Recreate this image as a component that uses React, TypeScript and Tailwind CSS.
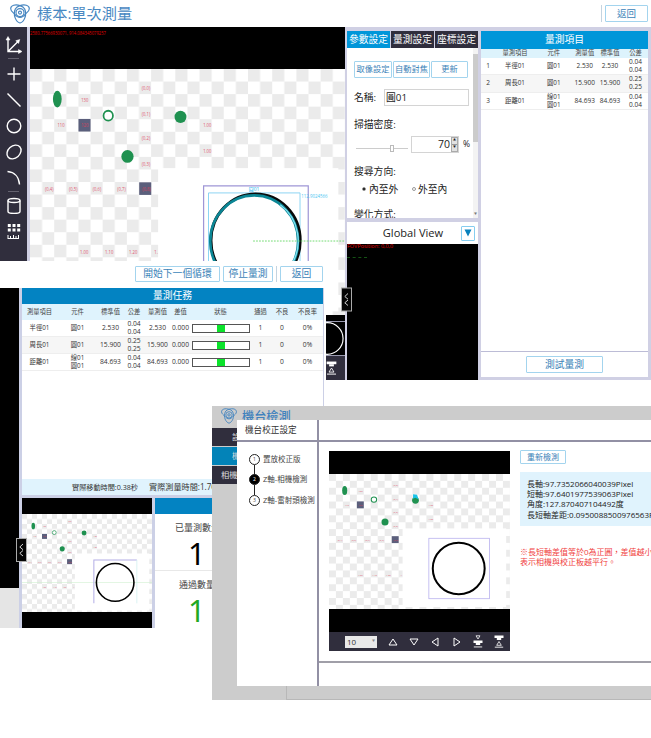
import React from "react";

const SCENE_LABELS: [number, number, string][] = [
  [66.3, 10.7, "(0,0)"],
  [66.3, 24.7, "(0,1)"],
  [66.3, 38.3, "(0,2)"],
  [66.3, 52.3, "(0,3)"],
  [31.3, 17, "130"],
  [17.7, 30.7, "110"],
  [31.3, 30.7, "120"],
  [101.3, 30.7, "1.00"],
  [101.3, 45.3, "1.00"],
  [11, 66, "(0,4)"],
  [24.7, 66, "(0,5)"],
  [38.3, 66, "(0,6)"],
  [52.3, 66, "(0,7)"],
  [66.5, 66, "(0,8)"],
  [31, 100.7, "1.00"],
  [45.3, 100.7, "1.10"],
  [59, 100.7, "1.20"],
];

type SceneProps = {
  id: string;
  className: string;
  variant: "live" | "task" | "axis";
};

function Scene({ id, className, variant }: SceneProps) {
  return (
    <svg viewBox="0 0 180 135" preserveAspectRatio="none" className={className}>
      <defs>
        <pattern id={id} width="13.84" height="13.78" patternUnits="userSpaceOnUse">
          <rect width="13.84" height="13.78" fill="#fff" />
          <rect width="6.92" height="6.89" fill="#ebebeb" />
          <rect x="6.92" y="6.89" width="6.92" height="6.89" fill="#ebebeb" />
        </pattern>
      </defs>
      <rect width="180" height="135" fill={`url(#${id})`} />
      <rect x="73.2" y="54.4" width="103" height="78.6" fill="#fff" />
      <g fill="#1f9150">
        <ellipse cx="15.6" cy="16.5" rx="2.5" ry="4.6" />
        <circle cx="86" cy="26.3" r="3.4" />
        <circle cx="55.7" cy="48" r="3.5" />
      </g>
      <circle cx="44.7" cy="25.6" r="2.7" fill="#fff" stroke="#1f9150" strokeWidth="1" />
      <rect x="27.7" y="27.4" width="6.9" height="6.9" fill="#5b5f7c" />
      <rect x="62.4" y="62.2" width="6.9" height="6.9" fill="#5b5f7c" />
      <g fill="#e0405a" fontSize="2.4" textAnchor="middle" opacity="0.85">
        {SCENE_LABELS.map(([x, y, t]) => (
          <text key={`${x}-${y}`} x={x} y={y + 0.9}>
            {t}
          </text>
        ))}
        <text x="72" y="101.6">1.</text>
      </g>
      {variant === "live" && (
        <g fill="none">
          <path d="M99.2 135V64.2H159V135" stroke="#9f96d6" strokeWidth="0.7" />
          <path d="M102 135V68H154.3V135" stroke="#7fd0f2" strokeWidth="0.5" />
          <circle cx="128.9" cy="94.1" r="25.5" stroke="#0a0a0a" strokeWidth="1.7" />
          <circle cx="128.1" cy="94.5" r="25.1" stroke="#0b8695" strokeWidth="1.5" />
          <path d="M143 74.5A24.2 24.2 0 0 1 149 108" stroke="#7fdff0" strokeWidth="0.8" />
          <path d="M127.5 94.4H180" stroke="#63d763" strokeWidth="0.5" strokeDasharray="1 0.7" />
          <text x="128" y="67" fontSize="2.8" textAnchor="middle" fill="#22b3ee">圓01</text>
          <text x="155" y="70.8" fontSize="3.1" textLength="15" lengthAdjust="spacingAndGlyphs" fill="#4cc7f2">112.9024566</text>
        </g>
      )}
      {variant === "task" && (
        <g fill="none">
          <path d="M0 94.4H180" stroke="#ccf0cc" strokeWidth="0.8" />
          <path d="M99.5 123V63.3H159" stroke="#b3aee6" strokeWidth="1.4" />
          <path d="M159 63.3V123" stroke="#cdeeee" strokeWidth="1" />
          <circle cx="129" cy="94.2" r="26" stroke="#000" strokeWidth="2.2" />
        </g>
      )}
      {variant === "axis" && (
        <g fill="none">
          <rect x="99.3" y="64.3" width="60.4" height="60.4" stroke="#b9b2ee" strokeWidth="0.8" />
          <circle cx="129" cy="94.5" r="25.8" stroke="#000" strokeWidth="2" />
          <path d="M83.6 20.2l4 .5 1.4 4.6-3.200-1.600-2.200 1z" fill="#19c3e8" />
        </g>
      )}
    </svg>
  );
}

function Logo({ className }: { className: string }) {
  return (
    <svg viewBox="0 0 20 20" className={className} fill="none" stroke="#4786c0" strokeWidth="1.15">
      <path d="M10 1.6C5.500 0 .6 1.300 .7 4.800c.1 2.600 2.500 3.600 3.800 5.200M10 1.600c4.500-1.600 9.400-.3 9.300 3.200-.1 2.600-2.500 3.600-3.800 5.200" />
      <path d="M5.300 5C2.600 11 6 18 10 19c4-1 7.400-8 4.700-14C13.600 2.800 11.500 2 10 1.600 8.500 2 6.400 2.800 5.300 5z" />
      <path d="M4.500 10c2 2.700 4 3.500 5.500 3.500s3.500-.8 5.500-3.500" />
      <circle cx="10" cy="8.600" r="4" />
      <circle cx="10" cy="8.600" r="1.500" />
    </svg>
  );
}

function Btn({ className, children }: { className: string; children: React.ReactNode }) {
  return (
    <button
      className={`flex shrink-0 items-center justify-center whitespace-nowrap rounded-[1px] border border-[#a3d4ee] bg-white leading-none text-[#3c83b8] ${className}`}
    >
      {children}
    </button>
  );
}

function Lens({ up, className }: { up?: boolean; className: string }) {
  return up ? (
    <svg viewBox="0 0 10 13" className={className} fill="#fff">
      <rect x=".5" y=".5" width="9" height="2.500" />
      <rect x="2.800" y="3" width="4.400" height="2" />
      <path d="M5 6.500L7.300 10.300H2.700z" fill="none" stroke="#fff" strokeWidth=".8" />
      <rect x=".8" y="11.700" width="8.400" height=".9" />
    </svg>
  ) : (
    <svg viewBox="0 0 10 13" className={className} fill="#fff">
      <path d="M3 .8h4L5 4z" fill="none" stroke="#fff" strokeWidth=".8" />
      <rect x=".5" y="5.500" width="9" height="2.500" />
      <rect x="2.800" y="8" width="4.400" height="2" />
      <rect x=".8" y="11.500" width="8.400" height=".9" />
    </svg>
  );
}

function Handle({ className }: { className: string }) {
  return (
    <svg viewBox="0 0 11 24" className={className}>
      <rect x=".5" y=".5" width="10" height="23" fill="#050505" stroke="#aaa" />
      <path d="M7 6L3.800 9l3.200 2.700M7 12.500L3.800 15.300 7 18" fill="none" stroke="#e8e8e8" strokeWidth=".9" />
    </svg>
  );
}

const TOOLS: { h: string; art: React.ReactNode }[] = [
  {
    h: "h-[26px] mt-[5px]",
    art: (
      <>
        <path d="M5 4V17.500H17.500M5 17.500L15 7.500" />
        <path d="M5 2.500L3 6h4zM19 17.500l-3.500-2v4zM16.800 5.500l-4 1.200 2.800 2.800z" fill="#fff" strokeWidth=".5" />
      </>
    ),
  },
  { h: "h-[27px] mt-[1px]", art: <path d="M11 4.500V17.500M4.500 11H17.500" /> },
  { h: "h-[26px]", art: <path d="M4.500 4.500L17.500 17.500" /> },
  { h: "h-[26px]", art: <circle cx="11" cy="11" r="6.800" /> },
  { h: "h-[26px]", art: <ellipse cx="11" cy="11" rx="7.800" ry="6" transform="rotate(-42 11 11)" /> },
  { h: "h-[26px]", art: <path d="M4.500 4.500C11.500 5 16 10 16.500 17.500" /> },
  {
    h: "h-[26px] mt-[1px]",
    art: (
      <>
        <ellipse cx="11" cy="5.500" rx="6" ry="2" />
        <path d="M5 5.500V16.500C5 19 17 19 17 16.500V5.500" />
      </>
    ),
  },
  {
    h: "h-[25px]",
    art: (
      <g fill="#fff" stroke="none">
        {[4.800, 9.500, 14.200].map((x) => (
          <React.Fragment key={x}>
            <rect x={x} y="3" width="3" height="3" />
            <rect x={x} y="7.500" width="3" height="3" />
          </React.Fragment>
        ))}
        <path d="M4.500 14h1v3h1.500v-2h1v2h2v-3h1v3h1.500v-2h1v2h1.500v-3h1v4H4.500z" />
      </g>
    ),
  },
];

function ToolRail() {
  return (
    <div className="flex w-[27px] shrink-0 flex-col items-center bg-[#302e3d]">
      {TOOLS.map((t, i) => (
        <React.Fragment key={i}>
          {(i === 1 || i === 6) && <div className="h-px w-[11px] shrink-0 bg-[#64626f]" />}
          <div className={`flex shrink-0 items-center ${t.h}`}>
            <svg viewBox="0 0 22 22" className="size-[22px]" fill="none" stroke="#fff" strokeWidth="1.4">
              {t.art}
            </svg>
          </div>
        </React.Fragment>
      ))}
    </div>
  );
}

const ITEMS = [
  ["1", "半徑01", "圓01", "2.530", "2.530", "0.04"],
  ["2", "周長01", "圓01", "15.900", "15.900", "0.25"],
  ["3", "距離01", "線01\n圓01", "84.693", "84.693", "0.04"],
];

function ParamsPanel() {
  return (
    <div className="flex h-[170px] bg-white">
      <div className="flex min-w-0 flex-1 flex-col overflow-hidden pl-[7px] text-[9.8px] leading-none text-[#222]">
        <div className="mt-[13px] flex shrink-0 gap-px text-[8.2px]">
          <Btn className="h-[17px] w-[38px]">取像設定</Btn>
          <Btn className="h-[17px] w-[37px]">自動對焦</Btn>
          <Btn className="h-[17px] w-[37px]">更新</Btn>
        </div>
        <div className="mt-[11px] flex h-[17px] shrink-0 items-center">
          <span className="w-[30px] whitespace-nowrap">名稱:</span>
          <div className="flex h-[17px] w-[85px] items-center border border-[#d4d4d4] pl-px">圓01</div>
        </div>
        <div className="mt-[14px] shrink-0">掃描密度:</div>
        <div className="mt-[6px] flex h-[17px] shrink-0 items-center">
          <div className="ml-[2px] flex h-[7px] w-[52px] items-center pt-[8px]">
            <div className="h-px w-[34px] bg-[#ccc]" />
            <div className="h-[7px] w-[4px] border border-[#bbb] bg-white" />
            <div className="h-px flex-1 bg-[#ccc]" />
          </div>
          <div className="ml-[3px] flex h-[17px] w-[48px] items-center justify-end border border-[#d4d4d4] text-[10.500px]">
            70
            <div className="ml-px flex h-[15px] w-[7px] flex-col border border-[#aaa] bg-[#e2e2e2] text-[3px]">
              <span className="flex flex-1 items-center justify-center border-b border-[#999]">▲</span>
              <span className="flex flex-1 items-center justify-center">▼</span>
            </div>
          </div>
          <span className="ml-[4px] text-[8.500px]">%</span>
        </div>
        <div className="mt-[14px] shrink-0">搜尋方向:</div>
        <div className="mt-[8px] flex shrink-0 items-center">
          <span className="ml-[8px] size-[4px] rounded-full border border-[#999] bg-black" />
          <span className="ml-[3px] w-[43px]">內至外</span>
          <span className="size-[4px] rounded-full border border-[#999]" />
          <span className="ml-[2px]">外至內</span>
        </div>
        <div className="mt-[16px] shrink-0">變化方式:</div>
      </div>
      <div className="flex w-[5px] shrink-0 flex-col items-center justify-between bg-[#f3f3f3] pb-[2px] text-[3px] leading-none text-[#777]">
        <div className="mt-[6px] h-[88px] w-full bg-[#cbcbcb]" />
        <span>▼</span>
      </div>
    </div>
  );
}

function MeasureWindow() {
  return (
    <section className="absolute left-0 top-0 flex h-[380px] w-[651px] flex-col bg-white">
      <header className="flex h-[27px] shrink-0 items-center">
        <Logo className="ml-[10px] size-[20px]" />
        <h1 className="ml-[7px] flex-1 whitespace-nowrap text-[15.2px] leading-none text-[#4888c2]">樣本:單次測量</h1>
        <div className="h-[17px] w-px bg-[#c4d4e0]" />
        <Btn className="ml-[3px] mr-[3px] h-[17px] w-[43px] text-[9.500px]">返回</Btn>
      </header>
      <div className="flex h-[353px] bg-[#d0d0e4]">
        <ToolRail />
        <div className="ml-[3px] flex w-[315px] shrink-0 flex-col bg-black">
          <div className="h-[41.500px] shrink-0 pt-[3px]">
            <svg viewBox="0 0 78 6" className="h-[6px] w-[78px]">
              <text x="0" y="4.600" fontSize="4.600" textLength="76" lengthAdjust="spacingAndGlyphs" fill="#e00000">
                2580.77566930071, 914.084345079257
              </text>
            </svg>
          </div>
          <Scene id="checker-live" variant="live" className="h-[246px] w-[315px] shrink-0" />
          <div className="h-[6px] shrink-0" />
          <div className="flex h-[35px] shrink-0 justify-end border-y border-[#9a9ab0]">
            <svg viewBox="0 0 20 34" className="h-full w-[20px]">
              <circle cx="2" cy="17" r="16.300" fill="none" stroke="#fff" strokeWidth="1.200" />
            </svg>
          </div>
          <div className="flex flex-1 items-center justify-end bg-[#302e3d] pr-[8px]">
            <Lens up className="h-[14px] w-[11px]" />
          </div>
        </div>
        <div className="ml-[2px] mt-[4px] flex w-[131px] shrink-0 flex-col">
          <div className="flex h-[17px] shrink-0 gap-px text-[9.800px] leading-none text-white">
            <div className="flex flex-1 items-center justify-center whitespace-nowrap bg-[#0096d9]">參數設定</div>
            <div className="flex flex-1 items-center justify-center whitespace-nowrap bg-[#302e3d]">量測設定</div>
            <div className="flex flex-1 items-center justify-center whitespace-nowrap bg-[#302e3d]">座標設定</div>
          </div>
          <ParamsPanel />
          <div className="mt-[4px] flex h-[22px] shrink-0 items-center bg-white">
            <span className="flex-1 pl-[18px] text-center text-[11.100px] leading-none text-[#222]">Global View</span>
            <div className="mr-[3px] flex h-[15px] w-[14px] items-center justify-center rounded-[1px] border border-[#85cdf0]">
              <svg viewBox="0 0 8 8" className="size-[8px]"><path d="M.5.5h7L4 7.500z" fill="#0881bd" /></svg>
            </div>
          </div>
          <div className="flex-1 bg-black text-[5.500px] leading-none text-[#e00000]">
            <div>FOVPosition: 0,0,0</div>
            <div className="mt-[7px] h-px w-[20px] border-t border-dashed border-[#145214]" />
          </div>
        </div>
        <div className="ml-[3px] mt-[4px] mb-[3px] flex w-[167px] shrink-0 flex-col bg-white">
          <div className="flex h-[18px] items-center justify-center bg-[#0096d9] text-[9.800px] leading-none text-white">量測項目</div>
          <div className="grid h-[8.500px] grid-cols-[14px_40px_37.5px_24.5px_26px_19px_6px] items-center bg-[#ddf3fc] text-center text-[6.300px] leading-none text-[#444]">
            <span />
            <span>量測項目</span>
            <span>元件</span>
            <span>測量值</span>
            <span>標準值</span>
            <span className="w-[25px]">公差</span>
          </div>
          {ITEMS.map((r, i) => (
            <div
              key={r[0]}
              className={`grid h-[17.600px] grid-cols-[14px_40px_37.5px_24.5px_26px_25px] items-center border-b border-[#eee] text-center text-[6.500px] leading-[8.300px] text-[#333] ${i === 1 ? "bg-[#f6f6f6]" : "bg-white"}`}
            >
              <span>{r[0]}</span>
              <span className="text-[6.300px]">{r[1]}</span>
              <span className="whitespace-pre-line text-[6.300px]">{r[2]}</span>
              <span>{r[3]}</span>
              <span>{r[4]}</span>
              <span className="whitespace-pre-line">{`${r[5]}\n${r[5]}`}</span>
            </div>
          ))}
          <div className="flex-1 border-b border-[#bcbcd6]" />
          <div className="flex h-[25px] items-center justify-center">
            <Btn className="h-[17px] w-[77px] text-[9.800px]">測試量測</Btn>
          </div>
        </div>
      </div>
      <Handle className="absolute left-[341px] top-[287px] h-[25px] w-[11px]" />
    </section>
  );
}

const TASKS = [
  ["半徑01", "圓01", "2.530", "0.04"],
  ["周長01", "圓01", "15.900", "0.25"],
  ["距離01", "線01\n圓01", "84.693", "0.04"],
];

function TaskWindow() {
  return (
    <section className="absolute left-0 top-[261px] flex h-[367px] w-[326px] flex-col bg-white">
      <header className="flex h-[27px] shrink-0 items-center justify-end pb-[1px] pr-[3px] text-[9.800px]">
        <Btn className="h-[16px] w-[85px]">開始下一個循環</Btn>
        <Btn className="ml-[3px] h-[16px] w-[50px]">停止量測</Btn>
        <div className="ml-[3px] mr-[3px] h-[16px] w-px bg-[#c4d4e0]" />
        <Btn className="h-[16px] w-[43px]">返回</Btn>
      </header>
      <div className="flex h-[340px]">
        <div className="flex w-[19px] shrink-0 flex-col">
          <div className="h-[300px] bg-black" />
          <div className="flex-1 bg-[#e5e5e5]" />
        </div>
        <div className="flex w-[305px] shrink-0 flex-col bg-[#ccd0e6] pl-[3px]">
          <div className="flex h-[191px] w-[301px] shrink-0 flex-col bg-white">
            <div className="flex h-[16px] shrink-0 items-center justify-center bg-[#0383c2] text-[9.800px] leading-none text-white">量測任務</div>
            <div className="grid h-[16px] shrink-0 grid-cols-[35px_41px_25px_22px_25px_21px_59px_21px_22px_29px] items-center bg-[#dff3fd] text-center text-[6.300px] leading-none text-[#444]">
              {["測量項目", "元件", "標準值", "公差", "量測值", "差值", "狀態", "通過", "不良", "不良率"].map((h) => (
                <span key={h}>{h}</span>
              ))}
            </div>
            {TASKS.map((r, i) => (
              <div
                key={r[0]}
                className={`grid h-[17px] shrink-0 grid-cols-[35px_41px_25px_22px_25px_21px_59px_21px_22px_29px] items-center border-b border-[#eee] text-center text-[6.700px] leading-[7.600px] text-[#333] ${i === 1 ? "bg-[#f6f6f6]" : "bg-white"}`}
              >
                <span className="text-[6.300px]">{r[0]}</span>
                <span className="whitespace-pre-line text-[6.300px]">{r[1]}</span>
                <span>{r[2]}</span>
                <span className="whitespace-pre-line">{`${r[3]}\n${r[3]}`}</span>
                <span>{r[2]}</span>
                <span>0.000</span>
                <div className="ml-px flex h-[9px] w-[58px] justify-center border border-[#555] bg-white">
                  <div className="h-full w-[8px] bg-[#0be32b]" />
                </div>
                <span>1</span>
                <span>0</span>
                <span>0%</span>
              </div>
            ))}
          </div>
          <div className="flex h-[16px] w-[301px] shrink-0 items-center overflow-hidden whitespace-nowrap bg-[#e0f3fd] text-[#333]">
            <span className="ml-[50px] w-[77px] text-[7.150px]">實際移動時間:0.38秒</span>
            <span className="text-[8.150px]">實際測量時間:1.763秒</span>
          </div>
          <div className="mt-[3px] flex flex-1">
            <div className="flex w-[130px] shrink-0 flex-col bg-black">
              <div className="h-[16px]" />
              <Scene id="checker-task" variant="task" className="h-[98px] w-[130px]" />
            </div>
            <div className="ml-[3px] flex w-[168px] shrink-0 flex-col bg-white text-[9px] leading-none text-[#444]">
              <div className="h-[16px] shrink-0 bg-[#0383c2]" />
              <div className="flex h-[57px] shrink-0 flex-col border-b border-[#e8e8e8]">
                <span className="ml-[20px] mt-[9px]">已量測數量</span>
                <span className="ml-[33px] mt-[6px] font-[family-name:Noto_Sans] text-[30.500px] text-black">1</span>
              </div>
              <span className="ml-[24px] mt-[9px]">通過數量</span>
              <span className="ml-[33px] mt-[6px] font-[family-name:Noto_Sans] text-[30.500px] text-[#22a822]">1</span>
            </div>
          </div>
        </div>
      </div>
      <Handle className="absolute left-[16px] top-[277px] h-[24px] w-[11px]" />
    </section>
  );
}

const STEPS = ["置放校正版", "Z軸-相機檢測", "Z軸-雷射頭檢測"];

function MoveIcon({ turn }: { turn: string }) {
  return (
    <svg viewBox="0 0 10 10" className={`size-[10px] ${turn}`} fill="none" stroke="#fff" strokeWidth="1">
      <path d="M5 2L9 8H1z" />
    </svg>
  );
}

function CalibrationWindow() {
  return (
    <section className="absolute left-[212px] top-[406px] flex h-[294px] w-[439px] flex-col overflow-hidden bg-[#ccc]">
      <header className="flex h-[14px] shrink-0">
        <Logo className="ml-[9px] mt-[2px] size-[16px] shrink-0" />
        <div className="ml-[5px] h-[14px] overflow-hidden pt-[5px]">
          <h2 className="whitespace-nowrap text-[12.200px] font-medium leading-none text-[#4081bd]">機台檢測</h2>
        </div>
      </header>
      <div className="flex h-[266px] shrink-0">
        <nav className="flex w-[25px] shrink-0 flex-col gap-px pt-[8px] text-[8.300px] leading-none text-[#ddd]">
          <div className="flex h-[18px] items-center overflow-hidden whitespace-nowrap bg-[#302e3d] pl-[20px]">設</div>
          <div className="flex h-[18px] items-center overflow-hidden whitespace-nowrap bg-[#0383b8] pl-[20px]">機</div>
          <div className="flex h-[18px] items-center overflow-hidden whitespace-nowrap bg-[#302e3d] pl-[9px]">相機</div>
        </nav>
        <div className="flex w-[80px] shrink-0 flex-col bg-white">
          <div className="flex h-[22px] shrink-0 items-center border-b-2 border-[#9290a4] pl-[8px] text-[8.600px] leading-none text-[#333]">機台校正設定</div>
          <div className="flex flex-col pl-[12px] pt-[12px]">
            {STEPS.map((s, i) => (
              <React.Fragment key={s}>
                {i > 0 && <div className="ml-[5px] h-[10px] w-px bg-[#222]" />}
                <div className="flex h-[10.600px] items-center whitespace-nowrap text-[7.500px] leading-none text-[#444]">
                  <span
                    className={`mr-[3px] flex size-[11px] shrink-0 items-center justify-center rounded-full border border-[#222] text-[5px] ${i === 1 ? "bg-black text-white" : "bg-white"}`}
                  >
                    {i + 1}
                  </span>
                  {s}
                </div>
              </React.Fragment>
            ))}
          </div>
        </div>
        <div className="flex flex-1 flex-col border-l-2 border-[#9290a4] bg-white">
          <div className="h-[22px] shrink-0 border-b-2 border-[#9290a4]" />
          <div className="flex h-[221px] shrink-0 border-b-2 border-[#a09fa8] pt-[8px]">
            <div className="ml-[10px] mt-px flex h-[200px] w-[181px] shrink-0 flex-col bg-black">
              <div className="h-[23px] shrink-0" />
              <Scene id="checker-axis" variant="axis" className="h-[135px] w-[181px] shrink-0" />
              <div className="h-[23px] shrink-0" />
              <div className="flex flex-1 items-center bg-[#302e3d]">
                <div className="ml-[16px] mr-[11px] flex h-[12px] w-[32px] items-center justify-between bg-[#e9e9e9] px-[2px] text-[8px] leading-none text-[#333]">
                  10
                  <span className="text-[3px] text-[#888]">▼</span>
                </div>
                <div className="flex items-center gap-[11.200px]">
                  <MoveIcon turn="rotate-0" />
                  <MoveIcon turn="rotate-180" />
                  <MoveIcon turn="-rotate-90" />
                  <MoveIcon turn="rotate-90" />
                  <Lens className="h-[13px] w-[10px]" />
                  <Lens up className="h-[13px] w-[10px]" />
                </div>
              </div>
            </div>
            <div className="ml-[10px] flex min-w-0 flex-1 flex-col overflow-hidden">
              <Btn className="h-[14px] w-[46px] text-[8px]">重新檢測</Btn>
              <div className="mt-[8px] h-[54px] shrink-0 whitespace-nowrap bg-[#e0f3fd] pl-[7px] pt-[7px] text-[8px] leading-[10.200px] text-[#222]">
                <div>長軸:97.7352066040039Pixel</div>
                <div>短軸:97.6401977539063Pixel</div>
                <div>角度:127.870407104492度</div>
                <div>長短軸差距:0.0950088500976563Pixel</div>
              </div>
              <div className="mt-[21px] shrink-0 whitespace-nowrap text-[8px] leading-[10.400px] text-[#f04040]">
                <div>※長短軸差值等於0為正圓，差值越小</div>
                <div>表示相機與校正板越平行。</div>
              </div>
            </div>
          </div>
          <div className="flex-1" />
        </div>
      </div>
      <div className="ml-[74px] h-[14px] shrink-0 border-b border-l border-[#b8b8b8]" />
    </section>
  );
}

export default function App() {
  return (
    <main
      lang="zh-Hant"
      className="relative h-[738px] w-[651px] overflow-hidden bg-white font-[family-name:Open_Sans,Noto_Sans_CJK_TC,sans-serif]"
    >
      <MeasureWindow />
      <TaskWindow />
      <CalibrationWindow />
    </main>
  );
}
